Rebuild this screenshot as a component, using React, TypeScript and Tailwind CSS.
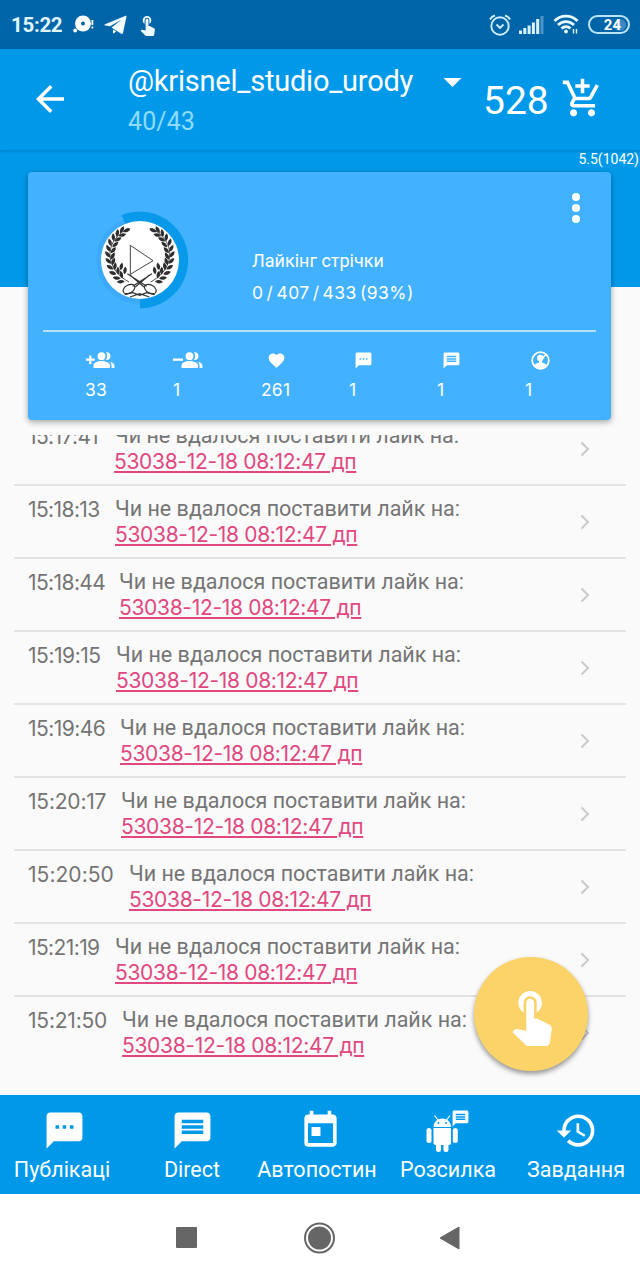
import React from 'react';
import {
  MdAddShoppingCart,
  MdArrowBack,
  MdArrowDropDown,
  MdFavorite,
  MdHistory,
  MdMessage,
  MdSms,
  MdToday,
  MdTouchApp,
} from 'react-icons/md';

const DIGITS = "font-['Inter',sans-serif]";

const logs = [
  { time: '15:17:41', timeClass: 'w-[86px] tracking-[-0.600px]' },
  { time: '15:18:13', timeClass: 'w-[87px] tracking-[-0.600px]' },
  { time: '15:18:44', timeClass: 'w-[91px] tracking-[-0.600px]' },
  { time: '15:19:15', timeClass: 'w-[88px] tracking-[-0.450px]' },
  { time: '15:19:46', timeClass: 'w-[92px] tracking-[-0.550px]' },
  { time: '15:20:17', timeClass: 'w-[93px] tracking-[-0.200px]' },
  { time: '15:20:50', timeClass: 'w-[101px] tracking-[0.050px]' },
  { time: '15:21:19', timeClass: 'w-[87px] tracking-[-0.600px]' },
  { time: '15:21:50', timeClass: 'w-[94px] tracking-[-0.200px]' },
];

const StatusBar = () => (
  <div className="flex h-[49px] items-center bg-[#0064a8] pl-[11px] pr-[10px] text-white">
    <span className="w-[62px] text-[20.500px] font-bold leading-6 tracking-[-0.300px] text-[#e0f6ff]">15:22</span>
    <svg className="h-[20px] w-[22px]" viewBox="0 0 22 20" fill="#fff">
      <circle cx="10" cy="8.500" r="8" />
      <circle cx="2.200" cy="15.500" r="1.900" />
      <circle cx="10" cy="8.500" r="2" fill="#0064a8" />
      <path d="M18.500 5h1.800v5h-1.800zM18.500 11.500h1.800v2h-1.800z" />
    </svg>
    <svg className="ml-[9px] h-[20px] w-[23px]" viewBox="0 0 23 20" fill="#f2fbff">
      <path d="M1 9.300 21 .9c1-.4 1.600.2 1.400 1.200L19 18c-.2 1-1 1.200-1.800.7L7.500 12.500 17.500 4.800 6 11.300 1.200 10.500C.4 10.200.3 9.600 1 9.300zM9 14.500l3.200 1.700-2.200 2c-.5.400-1 .2-1-.5z" />
    </svg>
    <MdTouchApp className="ml-[9px] mb-[1px] size-[23px] text-[#eefaff]" />
    <svg className="ml-auto h-[22px] w-[22px]" viewBox="0 0 22 22" fill="none" stroke="#cdeefc" strokeWidth="1.900">
      <circle cx="11" cy="12" r="8.700" />
      <path d="M7.500 10.500 11 14l3.500-3.500M1 5.500C2 3.500 4 2 6 1.500M21 5.500C20 3.500 18 2 16 1.500" />
    </svg>
    <svg className="ml-[8px] h-[18px] w-[25px]" viewBox="0 0 25 18" fill="#d8f3ff">
      <path d="M0 14.500h3V18H0zM4.300 12h3v6h-3zM8.600 9.500h3V18h-3zM12.900 6.500h3V18h-3zM17.200 3h3v15h-3z" />
      <path d="M21.500 0h3v18h-3z" opacity=".35" />
    </svg>
    <svg className="ml-[9px] h-[21px] w-[27px]" viewBox="0 0 27 21" fill="none" stroke="#e8f8ff" strokeWidth="2.900">
      <path d="M1.500 7C8 .5 18 .5 24.500 7M5 11c4.500-4.500 11.500-4.500 16 0M8.500 14.500c2.700-2.500 6.300-2.500 9 0" />
      <circle cx="13" cy="17.500" r="1.500" fill="#e8f8ff" strokeWidth="1" />
      <path d="M20.500 15v4.500M23.500 15v4.500" strokeWidth="1.400" />
    </svg>
    <div className="ml-[8px] flex h-[19px] w-[42px] items-center justify-end rounded-full border-2 border-[#b9e4fa] pr-[2px]">
      <span className="relative z-10 -mr-[7px] text-[15px] font-bold leading-4">24</span>
      <span className="size-[12px] rounded-full bg-[#3c88c4]" />
    </div>
  </div>
);

const Header = () => (
  <header className="relative flex h-[101px] bg-[#0099ea] pl-[29px] text-white shadow-[0_1px_3px_rgba(0,60,110,0.350)]">
    <MdArrowBack className="mt-[29px] size-[42px]" />
    <div className="ml-[57px] w-[303px] pt-[16px]">
      <div className="text-[29px] leading-8 tracking-[-0.220px]">@krisnel_studio_urody</div>
      <div className="mt-[7px] text-[25px] leading-9 tracking-[0.100px] text-[#8fdcff]">40/43</div>
    </div>
    <MdArrowDropDown className="mt-[11px] size-[43px]" />
    <span className="ml-[9px] mt-[29px] w-[78px] text-[39px] leading-[46px]">528</span>
    <MdAddShoppingCart className="mt-[28px] size-[43px]" />
  </header>
);

const leaves = [
  [110, 76, 65], [96, 74, 30], [97, 90, 75], [82, 84, 10], [84, 103, 62],
  [70, 97, -5], [76, 119, 50], [60, 112, -18], [70, 136, 42], [55, 130, -28],
  [68, 153, 30], [53, 148, -38], [70, 169, 18], [55, 168, -48], [75, 184, 8],
  [60, 187, -58], [84, 197, -2], [68, 204, -70], [94, 209, -14], [80, 219, -82],
  [105, 196, 10], [92, 230, -95], [94, 184, 12],
];

const Branch = () => (
  <g>
    <path d="M116 70C76 88 48 130 65 175c8 22 26 42 52 56" fill="none" stroke="#333" strokeWidth="2.500" />
    {leaves.map(([x, y, angle], i) => (
      <path key={i} d="M0-12C7-4 7 4 0 12C-7 4-7-4 0-12z" fill="#2e2e2e" transform={`translate(${x} ${y}) rotate(${angle})`} />
    ))}
  </g>
);

const Avatar = () => (
  <svg className="h-[110px] w-[100px] shrink-0" viewBox="0 0 300 330">
    <circle cx="150" cy="165" r="124" fill="none" stroke="#3caaf9" strokeWidth="14" />
    <path d="M95 30A145 145 0 1 1 150 310V165z" fill="#0899ea" />
    <path d="M150 20.500A144.500 144.500 0 0 1 150 309.500z" fill="#0899ea" />
    <circle cx="150" cy="165" r="117" fill="#fff" />
    <Branch />
    <g transform="translate(299 0) scale(-1 1)">
      <Branch />
    </g>
    <path d="M121 121v87l68-41z" fill="none" stroke="#222" strokeWidth="2.500" />
    <g fill="none" stroke="#333" strokeWidth="3.500">
      <path d="M112 206 170 244M186 206 128 244M120 210l42 36M178 210l-42 36" />
      <ellipse cx="117" cy="252" rx="19" ry="12" transform="rotate(-30 117 252)" />
      <ellipse cx="181" cy="252" rx="19" ry="12" transform="rotate(30 181 252)" />
      <path d="M104 269l24-6 21 8 21-8 24 6M120 276l29-10 29 10" />
    </g>
  </svg>
);

const Group = ({ minus = false }: { minus?: boolean }) => (
  <svg className="h-[18px] w-[30px]" viewBox="0 0 30 18" fill="#fff">
    <path d={minus ? 'M0 7.500h10v2.300H0z' : 'M4.200 4.500h2.200v3.100h3.300v2.200H6.400v3.100H4.200V9.800H.9V7.600h3.300z'} />
    <circle cx="16.500" cy="5.200" r="3.900" />
    <path d="M8.500 17v-2.500c0-3 4-4.500 8-4.500s8.500 1.500 8.500 4.500V17z" />
    <path d="M21 1.300c2.500-.4 4.500 1.300 4.500 3.900S23.500 9.500 21 9c1.500-2 1.500-5.500 0-7.700zM24.500 10.400c2.700.7 5 2 5 4.300V17H26.500v-2.500c0-1.700-.7-3-2-4.100z" />
  </svg>
);

const PersonOff = () => (
  <svg className="size-[19px]" viewBox="0 0 19 19" fill="#fff">
    <circle cx="9.500" cy="9.500" r="8.300" fill="none" stroke="#fff" strokeWidth="1.700" />
    <circle cx="9.300" cy="7" r="3.200" />
    <path d="M3 15c1-2.500 3.500-3.200 5-3.600V9h3v2.400c1.500.4 4 1.100 5 3.600-3.500 4-9.500 4-13 0z" />
    <path d="M9.500 9.500 14.500 4" stroke="#fff" strokeWidth="1.800" />
  </svg>
);

const stats = [
  { icon: <Group />, value: '33' },
  { icon: <Group minus />, value: '1' },
  { icon: <MdFavorite className="size-[19px]" />, value: '261' },
  { icon: <MdSms className="mr-[2px] size-[19px]" />, value: '1' },
  { icon: <MdMessage className="mr-[2px] size-[19px]" />, value: '1' },
  { icon: <PersonOff />, value: '1' },
];

const Card = () => (
  <section className="relative mx-[28px] -mt-[115px] h-[248px] w-[583px] rounded-[4px] bg-[#42b1ff] px-[15px] text-white shadow-[0_2px_6px_rgba(0,0,0,0.350)]">
    <div className="flex h-[160px] border-b-2 border-[#b5deff]">
      <div className="ml-[47px] mt-[33px]">
        <Avatar />
      </div>
      <div className="ml-[62px] mt-[77px] w-[290px]">
        <div className="text-[18px] leading-6">Лайкінг стрічки</div>
        <div className={`${DIGITS} mt-[8px] text-[17.500px] leading-6 tracking-[0.450px] [word-spacing:-2.300px]`}>0 / 407 / 433 (93%)</div>
      </div>
      <svg className="ml-[26px] mt-[20px] h-[32px] w-[16px]" viewBox="0 0 16 32" fill="#fff">
        <circle cx="8" cy="5" r="4" />
        <circle cx="8" cy="16" r="4" />
        <circle cx="8" cy="27" r="4" />
      </svg>
    </div>
    <div className="flex pl-[42px] pt-[18px]">
      {stats.map((stat, i) => (
        <div key={i} className="w-[88px] shrink-0">
          <div className="flex h-[20px] w-[30px] items-center justify-center">{stat.icon}</div>
          <div className={`${DIGITS} mt-[8px] text-[17.500px] leading-6 tracking-[0.200px]`}>{stat.value}</div>
        </div>
      ))}
    </div>
  </section>
);

const LogRow = ({ time, timeClass }: { time: string; timeClass: string }) => (
  <li className="flex h-[73px] border-b-2 border-[#e2e4e4] pl-[14px] text-[#757575] last:border-b-0">
    <span className={`${DIGITS} ${timeClass} shrink-0 whitespace-nowrap pt-[10px] text-[21px] leading-[27px]`}>{time}</span>
    <div className="w-[465px] shrink-0 pt-[9px]">
      <div className="text-[21.500px] leading-[27px]">Чи не вдалося поставити лайк на:</div>
      <a className={`${DIGITS} inline-block text-[21px] leading-[25px] tracking-[-0.320px] text-[#e0487f] underline decoration-[1.500px] underline-offset-[2px]`}>
        53038-12-18 08:12:47 дп
      </a>
    </div>
  </li>
);

const Chevron = () => (
  <svg className="h-[73px] w-[10px]" viewBox="0 0 10 73" fill="none" stroke="#c9c9c9" strokeWidth="2">
    <path d="m1.500 29.500 6.500 6.500-6.500 6.500" />
  </svg>
);

const LogList = () => (
  <div className="mx-[14px] mt-[15px] flex h-[660px] overflow-hidden">
    <ul className="-mt-[22px] w-[612px] shrink-0">
      {logs.map((log) => (
        <LogRow key={log.time} {...log} />
      ))}
    </ul>
    <div className="-ml-[46px] -mt-[22px] shrink-0">
      {logs.map((log) => (
        <Chevron key={log.time} />
      ))}
    </div>
  </div>
);

const MailBot = () => (
  <div className="relative h-[43px] w-[43px]">
    <svg className="-ml-[1px] h-[43px] w-[32px]" viewBox="0 0 32 43" fill="#fff">
      <path d="M7.500 18c0-4.500 3.700-8.500 8.800-8.500S25 13.500 25 18z" />
      <path d="m8.500 6.500 3.500 4.500M24 6.500 20.500 11" stroke="#fff" strokeWidth="1.200" />
      <circle cx="12.500" cy="14" r="1" fill="#0099ea" />
      <circle cx="20" cy="14" r="1" fill="#0099ea" />
      <rect x=".5" y="19" width="5" height="15" rx="2.500" />
      <rect x="26.800" y="19" width="5" height="15" rx="2.500" />
      <path d="M7.500 19H25v15c0 1-.7 2-2 2H9.500c-1.200 0-2-1-2-2z" />
      <rect x="10" y="30" width="5" height="13" rx="2.200" />
      <rect x="17.500" y="30" width="5" height="13" rx="2.200" />
    </svg>
    <MdMessage className="absolute left-[24px] top-0 size-[19px]" />
  </div>
);

const tabs = [
  { icon: <MdSms className="size-[43px]" />, label: 'Публікаці', box: 'pr-[4px]' },
  { icon: <MdMessage className="size-[43px]" />, label: 'Direct', box: '' },
  { icon: <MdToday className="size-[43px]" />, label: 'Автопостин', box: 'pr-[6px]' },
  { icon: <MailBot />, label: 'Розсилка', box: '' },
  { icon: <MdHistory className="size-[43px]" />, label: 'Завдання', box: '' },
];

const BottomNav = () => (
  <nav className="flex h-[99px] bg-[#0099ea] pt-[14px] text-white">
    {tabs.map((tab) => (
      <div key={tab.label} className="flex w-[128px] flex-col items-center">
        {tab.icon}
        <span className={`${tab.box} mt-[4px] whitespace-nowrap text-[21.500px] leading-7`}>{tab.label}</span>
      </div>
    ))}
  </nav>
);

const SystemNav = () => (
  <div className="flex h-[87px] items-center bg-white pl-[176px]">
    <span className="size-[21px] rounded-[1px] bg-[#666]" />
    <svg className="ml-[106px] size-[32px]" viewBox="0 0 32 32">
      <circle cx="16.500" cy="16" r="14.500" fill="none" stroke="#666" strokeWidth="2" />
      <circle cx="16.500" cy="16" r="11.500" fill="#666" />
    </svg>
    <svg className="ml-[104px] h-[24px] w-[21px]" viewBox="0 0 21 24" fill="#666">
      <path d="M20 1v22L1 12z" stroke="#666" strokeLinejoin="round" />
    </svg>
  </div>
);

export default function App() {
  return (
    <div className="relative h-[1280px] w-[640px] overflow-hidden bg-[#fafafa] font-['Roboto',sans-serif]">
      <StatusBar />
      <Header />
      <div className="h-[137px] bg-[#0099ea] pr-[1px] text-right text-[14px] leading-[18px] text-white">5.5(1042)</div>
      <Card />
      <LogList />
      <BottomNav />
      <SystemNav />
      <button className="absolute left-[474px] top-[957px] flex size-[114px] items-center justify-center rounded-full bg-[#fbd368] shadow-[0_3px_5px_rgba(0,0,0,0.400)]">
        <MdTouchApp className="size-[63px] text-white" />
      </button>
    </div>
  );
}
